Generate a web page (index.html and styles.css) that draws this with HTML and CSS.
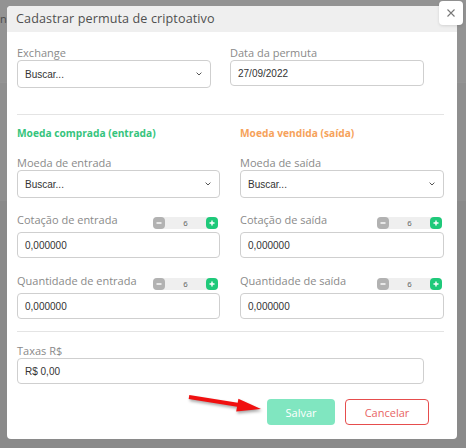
FILE: index.html
```html
<!DOCTYPE html>
<html lang="pt-BR">
<head>
<meta charset="utf-8">
<title>Cadastrar permuta de criptoativo</title>
<link rel="stylesheet" href="styles.css">
</head>
<body>
<div class="page-behind">
  <div class="behind-top"><span class="behind-text">na</span></div>
  <div class="behind-band"></div>
</div>

<div class="modal">
  <div class="modal-header">
    <h1 class="modal-title">Cadastrar permuta de criptoativo</h1>
  </div>
  <button class="close-btn" type="button" aria-label="Fechar">
    <svg width="10" height="10" viewBox="0 0 10 10"><path d="M1.5 1.5 L8.5 8.5 M8.5 1.5 L1.5 8.5" stroke="#777" stroke-width="1.1" fill="none"/></svg>
  </button>

  <div class="modal-body">
    <div class="grid grid-top">
      <div class="field">
        <label class="label">Exchange</label>
        <div class="select">
          <span>Buscar...</span>
          <svg class="chev" width="6" height="4" viewBox="0 0 6 4"><path d="M0.6 0.6 L3 3 L5.4 0.6" stroke="#555" stroke-width="1" fill="none"/></svg>
        </div>
      </div>
      <div class="field">
        <label class="label">Data da permuta</label>
        <div class="input">27/09/2022</div>
      </div>
    </div>

    <div class="divider divider-1"></div>

    <div class="grid grid-wide">
      <div class="col">
        <div class="section-title green">Moeda comprada (entrada)</div>
        <div class="field">
          <label class="label">Moeda de entrada</label>
          <div class="select">
            <span>Buscar...</span>
            <svg class="chev" width="6" height="4" viewBox="0 0 6 4"><path d="M0.6 0.6 L3 3 L5.4 0.6" stroke="#555" stroke-width="1" fill="none"/></svg>
          </div>
        </div>
        <div class="field step-field">
          <div class="label-row">
            <label class="label">Cotação de entrada</label>
            <div class="stepper">
              <span class="st-btn minus"><svg width="6" height="6" viewBox="0 0 6 6"><path d="M0.5 3 H5.5" stroke="#fff" stroke-width="1.4"/></svg></span>
              <span class="st-val">6</span>
              <span class="st-btn plus"><svg width="6" height="6" viewBox="0 0 6 6"><path d="M0.5 3 H5.5 M3 0.5 V5.5" stroke="#fff" stroke-width="1.4"/></svg></span>
            </div>
          </div>
          <div class="input">0,000000</div>
        </div>
        <div class="field step-field">
          <div class="label-row">
            <label class="label">Quantidade de entrada</label>
            <div class="stepper">
              <span class="st-btn minus"><svg width="6" height="6" viewBox="0 0 6 6"><path d="M0.5 3 H5.5" stroke="#fff" stroke-width="1.4"/></svg></span>
              <span class="st-val">6</span>
              <span class="st-btn plus"><svg width="6" height="6" viewBox="0 0 6 6"><path d="M0.5 3 H5.5 M3 0.5 V5.5" stroke="#fff" stroke-width="1.4"/></svg></span>
            </div>
          </div>
          <div class="input">0,000000</div>
        </div>
      </div>

      <div class="col">
        <div class="section-title orange">Moeda vendida (saída)</div>
        <div class="field">
          <label class="label">Moeda de saída</label>
          <div class="select">
            <span>Buscar...</span>
            <svg class="chev" width="6" height="4" viewBox="0 0 6 4"><path d="M0.6 0.6 L3 3 L5.4 0.6" stroke="#555" stroke-width="1" fill="none"/></svg>
          </div>
        </div>
        <div class="field step-field">
          <div class="label-row">
            <label class="label">Cotação de saída</label>
            <div class="stepper">
              <span class="st-btn minus"><svg width="6" height="6" viewBox="0 0 6 6"><path d="M0.5 3 H5.5" stroke="#fff" stroke-width="1.4"/></svg></span>
              <span class="st-val">6</span>
              <span class="st-btn plus"><svg width="6" height="6" viewBox="0 0 6 6"><path d="M0.5 3 H5.5 M3 0.5 V5.5" stroke="#fff" stroke-width="1.4"/></svg></span>
            </div>
          </div>
          <div class="input">0,000000</div>
        </div>
        <div class="field step-field">
          <div class="label-row">
            <label class="label">Quantidade de saída</label>
            <div class="stepper">
              <span class="st-btn minus"><svg width="6" height="6" viewBox="0 0 6 6"><path d="M0.5 3 H5.5" stroke="#fff" stroke-width="1.4"/></svg></span>
              <span class="st-val">6</span>
              <span class="st-btn plus"><svg width="6" height="6" viewBox="0 0 6 6"><path d="M0.5 3 H5.5 M3 0.5 V5.5" stroke="#fff" stroke-width="1.4"/></svg></span>
            </div>
          </div>
          <div class="input">0,000000</div>
        </div>
      </div>
    </div>

    <div class="divider divider-2"></div>

    <div class="field taxas">
      <label class="label">Taxas R$</label>
      <div class="input">R$ 0,00</div>
    </div>

    <div class="actions">
      <button class="btn btn-save" type="button">Salvar</button>
      <button class="btn btn-cancel" type="button">Cancelar</button>
    </div>
  </div>

  <svg class="arrow" width="90" height="40" viewBox="0 0 90 40">
    <path d="M9 12 L59 20" stroke="#f01010" stroke-width="4" stroke-linecap="butt"/>
    <polygon points="81,24 58.4,13.7 56.2,26.5" fill="#f01010"/>
  </svg>
</div>
</body>
</html>
```

FILE: styles.css
```css
html, body {
  margin: 0;
  padding: 0;
}
body {
  width: 466px;
  height: 448px;
  overflow: hidden;
  position: relative;
  background: #8a8a8a;
  font-family: "Open Sans", "Noto Sans", sans-serif;
}

.page-behind {
  display: flex;
  flex-direction: column;
}
.behind-top {
  height: 82px;
  background: #939393;
  position: relative;
}
.behind-text {
  display: block;
  padding-left: 0;
  padding-top: 11px;
  font-size: 11px;
  color: #4a4a4a;
}
.behind-band {
  height: 118px;
  background: #8f8f8f;
  border-top: 1px solid #959595;
}

.modal {
  position: absolute;
  left: 7px;
  top: 6px;
  width: 450px;
  height: 433px;
  background: #fff;
  border-radius: 4px;
}

.modal-header {
  height: 26px;
  background: #efefef;
  border-radius: 4px 4px 0 0;
  padding-left: 9px;
}
.modal-title {
  margin: 0;
  font-size: 12.6px;
  font-weight: 400;
  line-height: 26px;
  color: #505050;
  letter-spacing: 0.1px;
}

.close-btn {
  position: absolute;
  top: -5px;
  right: -6px;
  width: 24px;
  height: 24px;
  padding: 0;
  border: none;
  border-radius: 4px;
  background: #fff;
  box-shadow: 0 1px 3px rgba(0,0,0,0.12);
  display: flex;
  align-items: center;
  justify-content: center;
}

.modal-body {
  padding: 13px 13px 0 10px;
}

.grid {
  display: grid;
}
.grid-top {
  grid-template-columns: 194px 194px;
  column-gap: 19px;
}
.grid-wide {
  grid-template-columns: 203px 204px;
  column-gap: 20px;
}

.field {
  display: flex;
  flex-direction: column;
}
.label {
  font-size: 11px;
  line-height: 15px;
  color: #8a8a8a;
}

.select, .input {
  box-sizing: border-box;
  border: 1px solid #cfcfcf;
  border-radius: 4px;
  background: #fff;
  font-family: "Liberation Sans", Arial, sans-serif;
  font-size: 10px;
  color: #333;
  padding-left: 7px;
  display: flex;
  align-items: center;
}
.select {
  height: 28px;
  justify-content: space-between;
  padding-right: 8px;
}
.input {
  height: 26px;
}

.divider {
  height: 1px;
  background: #e4e4e4;
}
.divider-1 {
  margin: 26px 0 11px;
}
.divider-2 {
  margin: 12px 0 11px;
}

.section-title {
  font-size: 10.2px;
  font-weight: 700;
  line-height: 14px;
  margin-bottom: 15px;
}
.green { color: #35c47c; }
.orange { color: #f6a25a; }

.step-field {
  margin-top: 14px;
}
.step-field + .step-field {
  margin-top: 15px;
}
.label-row {
  height: 20px;
  display: flex;
  justify-content: space-between;
  align-items: flex-start;
}
.stepper {
  margin-top: 5px;
  margin-right: 2px;
  width: 65px;
  height: 12px;
  background: #efefef;
  border-radius: 4px;
  display: flex;
  align-items: center;
}
.st-btn {
  width: 12px;
  height: 12px;
  border-radius: 4px;
  display: flex;
  align-items: center;
  justify-content: center;
}
.minus { background: #b2b2b2; }
.plus { background: #1fc97a; }
.st-val {
  flex: 1;
  text-align: center;
  font-family: "Liberation Sans", Arial, sans-serif;
  font-size: 8px;
  color: #666;
}

.taxas {
  width: 407px;
}

.actions {
  margin-top: 15px;
  padding-right: 15px;
  display: flex;
  justify-content: flex-end;
  gap: 10px;
}
.btn {
  height: 26px;
  border-radius: 4px;
  font-family: "Open Sans", "Noto Sans", sans-serif;
  font-size: 11px;
  padding: 0;
  box-sizing: border-box;
}
.btn-save {
  width: 68px;
  background: #80e6c0;
  border: none;
  color: #fff;
}
.btn-cancel {
  width: 84px;
  background: #fff;
  border: 1px solid #e64d4d;
  color: #e86464;
}

.arrow {
  position: absolute;
  left: 173px;
  top: 379px;
  filter: drop-shadow(1px 2px 1.5px rgba(0,0,0,0.35));
}
```
